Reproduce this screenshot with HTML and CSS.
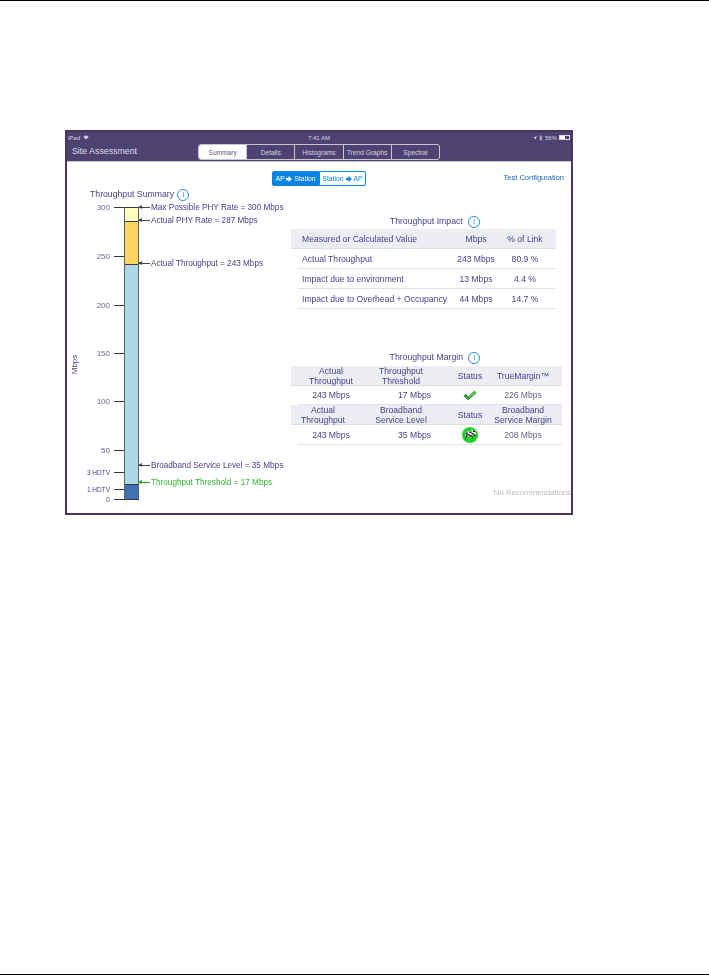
FILE: index.html
```html
<!DOCTYPE html>
<html lang="en">

<head>
    <meta charset="utf-8">
    <meta name="viewport" content="width=device-width, initial-scale=1.0">
    <title>Site Assessment</title>
    <link rel="stylesheet" href="styles.css">
</head>

<body>
    <main class="page">
        <section class="shot">
            <div class="status">
                <span class="status-left">iPad
                    <svg class="wifi" viewBox="0 0 10 8"><path d="M5 7.5 0.5 3a6.4 6.4 0 0 1 9 0z" fill="#cfcbe0"/></svg>
                </span>
                <span class="status-time">7:41 AM</span>
                <span class="status-right">
                    <svg class="loc" viewBox="0 0 6 6"><path d="M6 0 0 3h3v3z" fill="#e4e2ee"/></svg>
                    <svg class="bt" viewBox="0 0 5 8"><path d="M0.5 2 4 5.5 2.2 7.3V0.7L4 2.5 0.5 6" fill="none" stroke="#e4e2ee" stroke-width=".8"/></svg>
                    <span>56%</span>
                    <span class="battery"><span class="battery-fill"></span></span>
                </span>
            </div>
            <header class="nav">
                <h1 class="nav-title">Site Assessment</h1>
                <nav class="tabs">
                    <span class="tab active">Summary</span>
                    <span class="tab">Details</span>
                    <span class="tab">Histograms</span>
                    <span class="tab">Trend Graphs</span>
                    <span class="tab">Spectral</span>
                </nav>
            </header>

            <div class="screen">
                <div class="toprow">
                    <div class="toggle">
                        <span class="dir on">AP <svg class="arrow" viewBox="0 0 7 7"><path d="M0 2h3V0l4 3.5L3 7V5H0z" fill="#fff"/></svg> Station</span>
                        <span class="dir">Station <svg class="arrow" viewBox="0 0 7 7"><path d="M0 2h3V0l4 3.5L3 7V5H0z" fill="#0a84e0"/></svg> AP</span>
                    </div>
                    <a class="config">Test Configuration</a>
                </div>

                <div class="columns">
                    <div class="chart">
                        <h2 class="chart-title">Throughput Summary <span class="info">i</span></h2>
                        <span class="axis-name">Mbps</span>

                        <div class="bar">
                            <div class="seg seg-phy-max"></div>
                            <div class="seg seg-phy"></div>
                            <div class="seg seg-actual"></div>
                            <div class="seg seg-threshold"></div>
                        </div>

                        <div class="tick t300"><span>300</span><i></i></div>
                        <div class="tick t250"><span>250</span><i></i></div>
                        <div class="tick t200"><span>200</span><i></i></div>
                        <div class="tick t150"><span>150</span><i></i></div>
                        <div class="tick t100"><span>100</span><i></i></div>
                        <div class="tick t50"><span>50</span><i></i></div>
                        <div class="tick t3hd small"><span>3 HDTV</span><i></i></div>
                        <div class="tick t1hd small"><span>1 HDTV</span><i></i></div>
                        <div class="tick t0"><span>0</span><i></i></div>

                        <div class="callout c-max"><i></i>Max Possible PHY Rate = 300 Mbps</div>
                        <div class="callout c-phy"><i></i>Actual PHY Rate = 287 Mbps</div>
                        <div class="callout c-actual"><i></i>Actual Throughput = 243 Mbps</div>
                        <div class="callout c-broad"><i></i>Broadband Service Level = 35 Mbps</div>
                        <div class="callout c-thres green"><i></i>Throughput Threshold = 17 Mbps</div>
                    </div>

                    <div class="right">
                        <h2 class="table-title impact-title">Throughput Impact <span class="info">i</span></h2>
                        <div class="impact">
                            <div class="row head">
                                <span class="first">Measured or Calculated Value</span>
                                <span>Mbps</span>
                                <span>% of Link</span>
                            </div>
                            <div class="row">
                                <span class="first">Actual Throughput</span>
                                <span>243 Mbps</span>
                                <span>80.9 %</span>
                            </div>
                            <div class="row">
                                <span class="first">Impact due to environment</span>
                                <span>13 Mbps</span>
                                <span>4.4 %</span>
                            </div>
                            <div class="row">
                                <span class="first">Impact due to Overhead + Occupancy</span>
                                <span>44 Mbps</span>
                                <span>14.7 %</span>
                            </div>
                        </div>

                        <h2 class="table-title margin-title">Throughput Margin <span class="info">i</span></h2>
                        <div class="margin">
                            <div class="row head">
                                <span>Actual<br>Throughput</span>
                                <span>Throughput<br>Threshold</span>
                                <span class="state">Status</span>
                                <span>TrueMargin™</span>
                            </div>
                            <div class="row short">
                                <span>243 Mbps</span>
                                <span class="val">17 Mbps</span>
                                <span class="state">
                                    <svg class="check" viewBox="0 0 16 12"><path d="M0.5 6.5 3 4l3 2.8L13 0.5l2.5 2.5L6 11.5z" fill="#2f8f35"/><path d="M6 6.8 13 0.5l2.5 2.5-2 1.5L6 9z" fill="#5fbf55"/></svg>
                                </span>
                                <span class="soft">226 Mbps</span>
                            </div>
                            <div class="row head">
                                <span class="shift">Actual<br>Throughput</span>
                                <span>Broadband<br>Service Level</span>
                                <span class="state">Status</span>
                                <span>Broadband<br>Service Margin</span>
                            </div>
                            <div class="row">
                                <span>243 Mbps</span>
                                <span class="val">35 Mbps</span>
                                <span class="state">
                                    <svg class="flag" viewBox="0 0 16 16">
                                        <circle cx="8" cy="8" r="8" fill="#22d32c"/>
                                        <path d="M3 5.500 8 4l5-1.500 1 5-5 1.500-5 1.500z" fill="#e8e8e8"/>
                                        <path d="M3.500 5.500h2v1.500h-2zM7.500 4.500h2V6h-2zM11 3.500h2V5h-2zM5.500 7h2v1.500h-2zM9.500 6h2v1.500h-2zM4 8.500h1.500V10H4zM7.500 8h2v1.500h-2zM11.500 7.500h2V9h-2z" fill="#1c1c1c"/>
                                        <path d="M3.500 12.500 5 6M11 12l-1-3" stroke="#1c1c1c" stroke-width=".7"/>
                                    </svg>
                                </span>
                                <span class="soft">208 Mbps</span>
                            </div>
                        </div>

                        <p class="norec">No Recommendations</p>
                    </div>
                </div>
            </div>
        </section>
    </main>
</body></html>
```

FILE: styles.css
```css
* {
    box-sizing: border-box;
}

html,
body {
    margin: 0;
    height: 976px;
    background-color: #fff;
}

body {
    font-family: "Liberation Sans", Arial, sans-serif;
    color: #46428c;
}

.page {
    height: 975px;
    border-top: 1px solid #000;
    border-bottom: 1px solid #000;
    padding: 129px 0 0 65px;
}

/* the picture is a scaled down ipad screenshot, so it is a little soft */
.shot {
    width: 508px;
    height: 385px;
    border: 2px solid #47375f;
    display: flex;
    flex-direction: column;
    filter: blur(0.3px);
}

/* ipad status bar + nav */
.status {
    height: 11px;
    background-color: #4d4270;
    color: #d9d6e6;
    font-size: 6px;
    display: grid;
    grid-template-columns: 1fr auto 1fr;
    align-items: center;
    padding: 0 1px;
}

.status-left {
    display: flex;
    align-items: center;
    gap: 3px;
}

.wifi {
    width: 6px;
    height: 5px;
}

.status-right {
    display: flex;
    align-items: center;
    justify-content: flex-end;
    gap: 2px;
}

.loc {
    width: 4px;
    height: 4px;
}

.bt {
    width: 4px;
    height: 6px;
}

.battery {
    width: 11px;
    height: 5px;
    border: 1px solid #d9d6e6;
    display: block;
}

.battery-fill {
    display: block;
    width: 5px;
    height: 3px;
    background-color: #fff;
}

.nav {
    height: 19px;
    background-color: #4d4270;
    border-bottom: 1px solid #c9c6d6;
    display: flex;
    align-items: center;
    padding-left: 5px;
}

.nav-title {
    margin: 0 0 2px;
    font-size: 8.800px;
    font-weight: normal;
    color: #dedcea;
    width: 126px;
    flex: none;
}

.tabs {
    display: flex;
    height: 16px;
    width: 242px;
    border: 1px solid #c5c3d6;
    border-radius: 3px;
    overflow: hidden;
}

.tab {
    flex: 1;
    font-size: 6.600px;
    color: #d3d1e2;
    display: flex;
    align-items: center;
    justify-content: center;
    border-left: 1px solid #c5c3d6;
}

.tab.active {
    background-color: #fff;
    color: #5e5680;
    border-left: 0;
}

/* white area */
.screen {
    flex: 1;
    display: flex;
    flex-direction: column;
}

.toprow {
    display: grid;
    grid-template-columns: 1fr auto 1fr;
    height: 26px;
    padding-top: 9px;
}

.toggle {
    grid-column: 2;
    display: flex;
    height: 15px;
}

.dir {
    width: 47px;
    display: flex;
    align-items: center;
    justify-content: center;
    gap: 2px;
    font-size: 6.800px;
    color: #0a84e0;
    border: 1px solid #0a84e0;
    border-radius: 0 2px 2px 0;
}

.dir.on {
    background-color: #0a84e0;
    color: #fff;
    border-radius: 2px 0 0 2px;
}

.arrow {
    width: 6px;
    height: 6px;
}

.config {
    grid-column: 3;
    justify-self: end;
    padding: 2px 7px 0 0;
    font-size: 7.500px;
    color: #1668b8;
}

.columns {
    flex: 1;
    display: flex;
}

/* left chart, everything in here sits on mbps scale */
.chart {
    position: relative;
    width: 224px;
    flex: none;
}

.chart-title {
    position: absolute;
    left: 23px;
    top: 0;
    margin: 0;
    font-size: 8.700px;
    font-weight: normal;
    line-height: 12px;
    white-space: nowrap;
}

.info {
    display: inline-flex;
    align-items: center;
    justify-content: center;
    width: 12px;
    height: 12px;
    margin: -3px 0 -3px 3px;
    border: 1px solid #2a8fdc;
    border-radius: 50%;
    font-size: 8px;
    line-height: 1;
    color: #2a8fdc;
    vertical-align: 0;
}

.chart-title .info {
    margin-left: 1px;
}

.axis-name {
    position: absolute;
    left: -2px;
    top: 172px;
    font-size: 8px;
    transform: rotate(-90deg);
    transform-origin: center;
}

.bar {
    position: absolute;
    left: 57px;
    top: 19px;
    width: 15px;
    height: 293px;
    display: flex;
    flex-direction: column;
    border: 1px solid #5c6068;
    border-width: 0 1px;
}

.seg {
    border-top: 1px solid #3a3a3a;
}

.seg-phy-max {
    height: 14px;
    background-color: #ffffc0;
}

.seg-phy {
    height: 43px;
    background-color: #ffd562;
}

.seg-actual {
    height: 220px;
    background-color: #add8e6;
}

.seg-threshold {
    height: 16px;
    background-color: #3f72b2;
    border-bottom: 1px solid #3a3a3a;
}

.tick {
    position: absolute;
    left: 0;
    width: 57px;
    height: 12px;
    margin-top: -6px;
    display: flex;
    align-items: center;
    justify-content: flex-end;
    gap: 4px;
    font-size: 8px;
    color: #6a6890;
}

.tick i {
    width: 10px;
    height: 1px;
    background-color: #333;
}

.tick.small {
    font-size: 6.500px;
    color: #46428c;
}

.t300 { top: 19px; }
.t250 { top: 68px; }
.t200 { top: 117px; }
.t150 { top: 165px; }
.t100 { top: 213px; }
.t50 { top: 262px; }
.t3hd { top: 284px; }
.t1hd { top: 301px; }
.t0 { top: 311px; }

.callout {
    position: absolute;
    left: 71px;
    height: 12px;
    margin-top: -6px;
    display: flex;
    align-items: center;
    gap: 1px;
    font-size: 8.200px;
    white-space: nowrap;
}

.callout i {
    width: 12px;
    height: 1px;
    background-color: #444;
    position: relative;
}

.callout i::before {
    content: "";
    position: absolute;
    left: 0;
    top: -2px;
    border: 2.500px solid transparent;
    border-left: 0;
    border-right: 4px solid #444;
}

.callout.green {
    color: #2fb52f;
}

.callout.green i {
    background-color: #1fa51f;
}

.callout.green i::before {
    border-right-color: #1fa51f;
}

.c-max { top: 19px; }
.c-phy { top: 32px; }
.c-actual { top: 75px; }
.c-broad { top: 277px; }
.c-thres { top: 294px; }

/* right tables */
.right {
    flex: 1;
    display: flex;
    flex-direction: column;
    font-size: 8.600px;
}

.table-title {
    margin: 0;
    font-size: 8.700px;
    font-weight: normal;
    line-height: 12px;
    text-align: center;
    padding-left: 8px;
    white-space: nowrap;
}

.impact-title {
    margin-top: 27px;
}

.margin-title {
    margin-top: 42px;
}

.row {
    display: grid;
    align-items: center;
    text-align: center;
    border-bottom: 1px solid #e2e3e8;
    margin-left: 7px;
}

.head {
    background-color: #ecedf2;
    margin-left: 0;
    padding-left: 7px;
    border-bottom-color: #dcdde3;
}

.impact {
    width: 265px;
    margin-top: 2px;
}

.impact .row {
    grid-template-columns: 154px 48px 50px;
    height: 20px;
}

.impact .first {
    text-align: left;
    padding-left: 4px;
    white-space: nowrap;
}

.margin {
    width: 271px;
    margin-top: 3px;
}

.margin .row {
    grid-template-columns: 66px 74px 56px 58px;
    height: 20px;
    line-height: 10px;
    white-space: nowrap;
}

.margin .row.short {
    height: 19px;
}

.margin .state {
    padding-left: 8px;
}

.margin .head .shift {
    position: relative;
    left: -8px;
}

.margin .val {
    text-align: right;
    padding-right: 7px;
}

.soft {
    color: #66648e;
}

.check {
    display: block;
    width: 14px;
    height: 11px;
    margin: 0 auto;
}

.flag {
    display: block;
    width: 16px;
    height: 16px;
    margin: 0 auto;
}

.norec {
    margin: 43px 0 0;
    text-align: right;
    font-size: 7.800px;
    color: #b9b9c0;
    white-space: nowrap;
}
```
